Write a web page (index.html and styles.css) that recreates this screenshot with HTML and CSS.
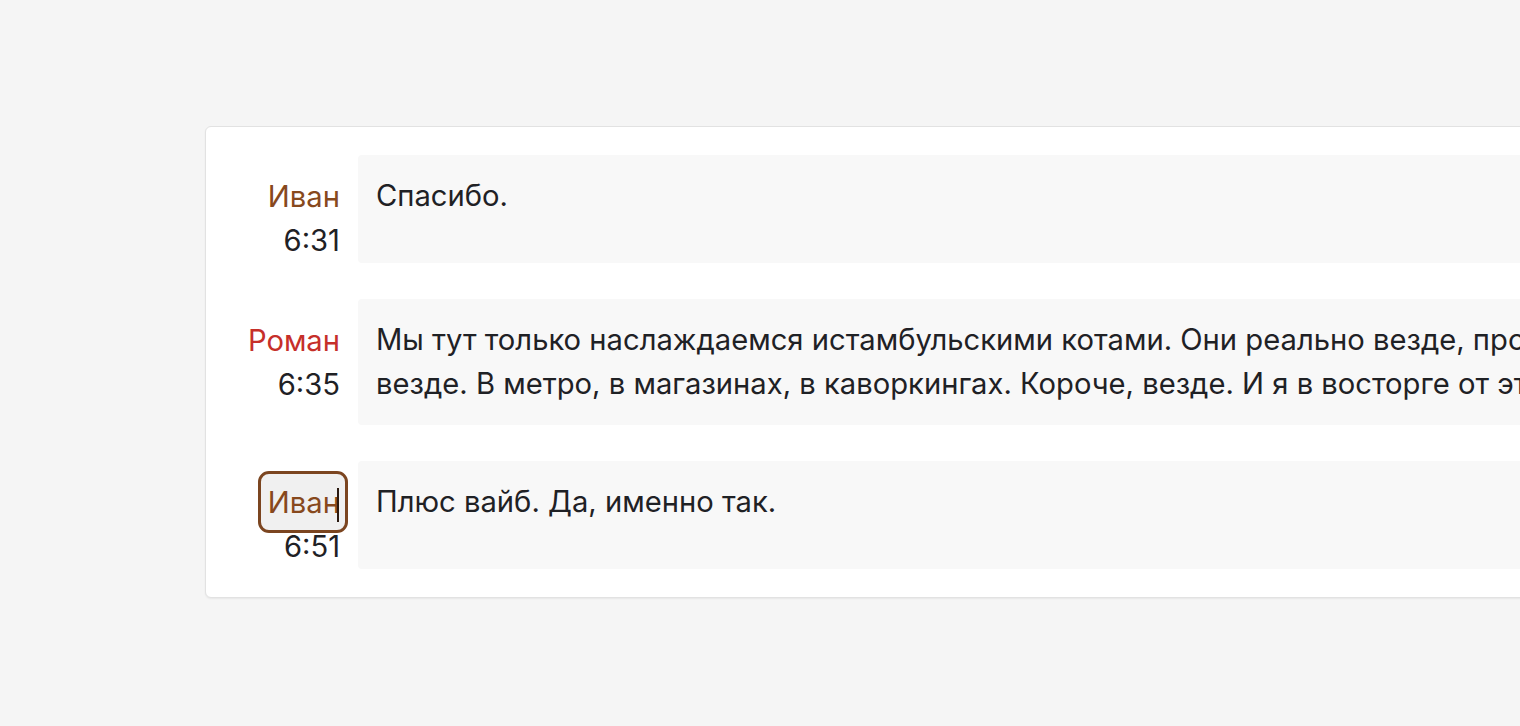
FILE: index.html
```html
<!DOCTYPE html>
<html lang="ru">
<head>
<meta charset="utf-8">
<title>Чат</title>
<link rel="stylesheet" href="styles.css">
</head>
<body>
<div class="page">
  <div class="card">
    <div class="row">
      <div class="meta">
        <span class="name ivan">Иван</span>
        <span class="time">6:31</span>
      </div>
      <div class="bubble">Спасибо.</div>
    </div>
    <div class="row">
      <div class="meta">
        <span class="name roman">Роман</span>
        <span class="time">6:35</span>
      </div>
      <div class="bubble wrap">Мы тут только наслаждаемся истамбульскими котами. Они реально везде, просто везде. В метро, в магазинах, в каворкингах. Короче, везде. И я в восторге от этого.</div>
    </div>
    <div class="row">
      <div class="meta">
        <span class="name ivan focused">Иван<span class="caret"></span></span>
        <span class="time">6:51</span>
      </div>
      <div class="bubble">Плюс вайб. Да, именно так.</div>
    </div>
  </div>
</div>
</body>
</html>
```

FILE: styles.css
```css
html, body {
  margin: 0;
  padding: 0;
  background: #f5f5f5;
  height: 100%;
  overflow: hidden;
}
.page {
  padding: 126px 0 0 205px;
  font-family: Inter, "Noto Sans", sans-serif;
  font-size: 29.2px;
  line-height: 44px;
  color: #1f2125;
}
.card {
  width: 1500px;
  background: #fff;
  border: 1px solid #e2e2e2;
  box-shadow: 0 1px 2px rgba(0, 0, 0, 0.06);
  border-radius: 6px;
  padding: 28px 0 28px 0;
  display: flex;
  flex-direction: column;
  gap: 36px;
}
.row {
  display: flex;
  gap: 18px;
}
.meta {
  width: 134px;
  flex: none;
  display: flex;
  flex-direction: column;
  align-items: flex-end;
  padding-top: 20px;
}
.name.ivan { color: #87491d; }
.name.roman { color: #c62f2a; }
.time { color: #1f2125; }
.bubble {
  flex: 1;
  background: #f8f8f8;
  border-radius: 4px;
  padding: 19px 18px;
  white-space: nowrap;
  overflow: hidden;
}
.bubble.wrap {
  white-space: normal;
  width: 1224px;
  flex: none;
}
.focused {
  display: inline-block;
  padding: 7px 5px 5px 7px;
  margin: -7px -5px -5px -7px;
  background: #f0f0f0;
  border-radius: 8px;
  outline: 3px solid #7b4520;
  line-height: 44px;
}
.caret {
  display: inline-block;
  width: 2px;
  height: 34px;
  background: #2a1a10;
  vertical-align: -9px;
  margin-left: -3px;
  margin-right: 1px;
}
```
